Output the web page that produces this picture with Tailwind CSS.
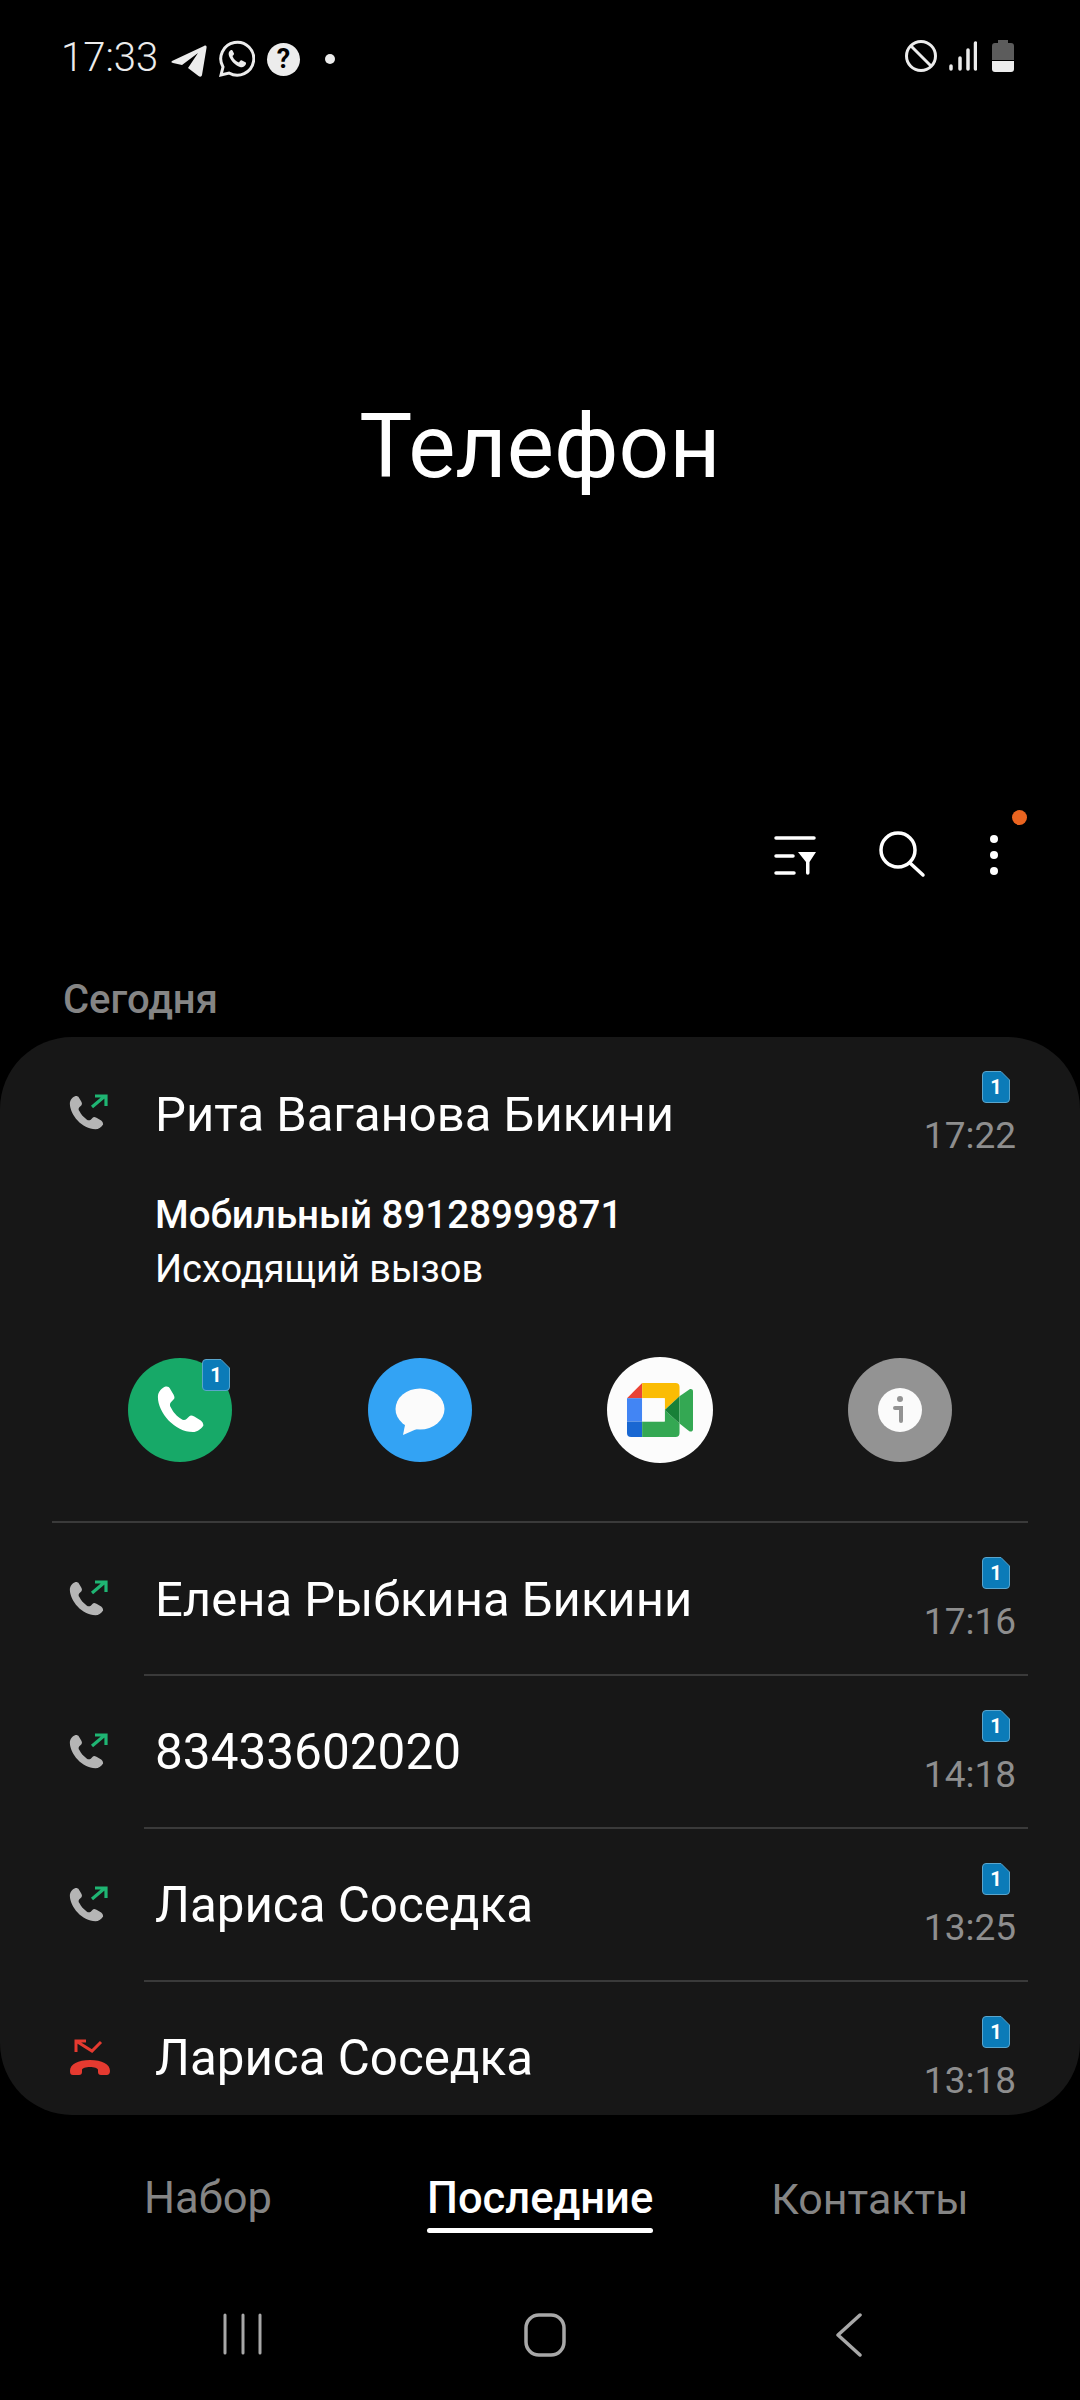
<!DOCTYPE html>
<html lang="ru">
  <head>
    <meta charset="UTF-8" />
    <meta name="viewport" content="width=device-width, initial-scale=1.0" />
    <title>Телефон</title>
    <script src="https://cdn.jsdelivr.net/npm/@tailwindcss/browser@4"></script>
  </head>
  <body class="bg-black text-white font-[Roboto,sans-serif]">
    <svg class="hidden">
      <defs>
        <symbol id="handset" viewBox="0 0 40 40">
          <path fill="currentColor" d="M9 2C6 3 3 6 3 10C3 22 16 37 30 37C33 37 36 35 38 32C38 30 37 29 36 28L31 25C29 24 28 24 27 25L25 27C24 28 22 28 21 27C17 24 15 22 13 18C12 17 12 15 13 14L15 12C16 11 16 10 15 8L12 3C11 2 10 2 9 2Z" />
        </symbol>
        <symbol id="outgoing" viewBox="0 0 40 38">
          <use href="#handset" x="-1" y="0" width="38" height="38" color="#b5b5b5" />
          <path fill="none" stroke="#1fb573" stroke-width="3.2" d="M24 13L37 2M27 2H38V12" />
        </symbol>
        <symbol id="sim" viewBox="0 0 28 32">
          <path fill="#0b7bb8" stroke="#5aa5cc" stroke-width="1" d="M4 .5H19L27.500 9V28A3.500 3.500 0 0 1 24 31.500H4A3.500 3.500 0 0 1 .5 28V4A3.500 3.500 0 0 1 4 .5Z" />
        </symbol>
      </defs>
    </svg>

    <div class="w-[1080px] h-[2400px] flex flex-col overflow-hidden">
      <!-- status bar -->
      <div class="h-[118px] shrink-0 flex items-center pl-[61px] pr-[66px] text-[#ececec]">
        <span class="text-[40px] font-light w-[98px] -mt-[2px]">17:33</span>
        <svg class="w-[36px] h-[34px] ml-[12px] mt-[4px]" viewBox="0 0 36 34">
          <path fill="currentColor" d="M1 17L33 2C35 1 36 2 35.500 4L31 31C30.500 33 29 33 27.500 32L17 24L27 9L11 21L2 19C0 18.500 0 18 1 17Z" />
        </svg>
        <svg class="w-[37px] h-[38px] ml-[11px]" viewBox="0 0 37 38">
          <path fill="none" stroke="currentColor" stroke-width="3" d="M3 35L5 27A16.500 16.500 0 1 1 11 33Z" />
          <path fill="currentColor" d="M13 10C11 11 10 13 11 16C13 21 17 25 22 27C25 28 27 26 28 24C28 23 28 22 27 22L24 20.500C23 20 22.500 20.500 22 21L21 22.500C18 21.500 15.500 19 14.500 16L15.500 15C16 14.500 16 14 16 13.500L14.500 10.500C14 10 13.500 10 13 10Z" />
        </svg>
        <div class="w-[33px] h-[33px] ml-[12px] rounded-full bg-[#ececec] flex items-center justify-center text-black text-[27px] font-bold leading-none">?</div>
        <div class="w-[10px] h-[10px] ml-[25px] rounded-full bg-[#ececec]"></div>

        <div class="ml-auto flex items-center mb-[6px]">
          <svg class="w-[32px] h-[32px]" viewBox="0 0 32 32">
            <circle cx="16" cy="16" r="14.500" fill="none" stroke="currentColor" stroke-width="3" />
            <path stroke="currentColor" stroke-width="3" d="M6 6L26 26" />
          </svg>
          <svg class="w-[28px] h-[30px] ml-[12px]" viewBox="0 0 28 30">
            <g stroke="currentColor" stroke-width="3.500" stroke-linecap="round">
              <path d="M2 25V28M11 17V28M19 9V28M26.500 2V28" />
            </g>
          </svg>
          <svg class="w-[22px] h-[32px] ml-[15px]" viewBox="0 0 22 32">
            <path fill="#5c5c5c" d="M6 0H16V3H19A3 3 0 0 1 22 6V20H0V6A3 3 0 0 1 3 3H6Z" />
            <path fill="#ececec" d="M0 21H22V29A3 3 0 0 1 19 32H3A3 3 0 0 1 0 29Z" />
          </svg>
        </div>
      </div>

      <!-- title -->
      <div class="h-[656px] shrink-0 flex items-center justify-center">
        <h1 class="text-[89px] leading-none font-normal">Телефон</h1>
      </div>

      <!-- toolbar -->
      <div class="h-[162px] shrink-0 flex items-center relative">
        <svg class="w-[42px] h-[40px] ml-[774px] mt-[2px]" viewBox="0 0 42 40" fill="none" stroke="white" stroke-width="3.500" stroke-linecap="round">
          <path d="M2 2H40M2 20H19M2 37H20" />
          <path fill="white" stroke="none" d="M24 16H42L35.500 26V37A1.700 1.700 0 0 1 32 37V26Z" />
        </svg>
        <svg class="w-[48px] h-[48px] ml-[62px]" viewBox="0 0 48 48" fill="none" stroke="white" stroke-width="3.500" stroke-linecap="round">
          <circle cx="20" cy="19" r="17" />
          <path d="M32 32L45 44" />
        </svg>
        <div class="flex flex-col gap-[8px] ml-[64px]">
          <div class="w-[8px] h-[8px] rounded-full bg-white"></div>
          <div class="w-[8px] h-[8px] rounded-full bg-white"></div>
          <div class="w-[8px] h-[8px] rounded-full bg-white"></div>
        </div>
        <div class="absolute left-[1012px] top-[36px] w-[15px] h-[15px] rounded-full bg-[#ea6420]"></div>
      </div>

      <!-- section label -->
      <div class="h-[101px] shrink-0 pl-[63px] pt-[42px] text-[40px] leading-[44px] font-medium text-[#858585]">Сегодня</div>

      <!-- call log -->
      <div class="h-[1078px] shrink-0 bg-[#171717] rounded-[72px] overflow-hidden">
        <!-- expanded entry -->
        <div class="h-[484px]">
          <div class="h-[152px] flex">
            <div class="w-[155px] shrink-0 pl-[68px] flex items-center">
              <svg class="w-[40px] h-[38px]"><use href="#outgoing" /></svg>
            </div>
            <div class="flex-1 flex items-center pt-[2px] text-[49px] leading-none whitespace-nowrap">Рита Ваганова Бикини</div>
            <div class="w-[150px] pr-[64px] pt-[34px] flex flex-col items-end">
              <div class="relative w-[28px] h-[32px] mr-[6px]">
                <svg class="w-[28px] h-[32px]"><use href="#sim" /></svg>
                <span class="absolute inset-0 flex items-center justify-center text-[20px] font-bold">1</span>
              </div>
              <div class="mt-[13px] text-[37px] leading-[40px] text-[#8e8e8e]">17:22</div>
            </div>
          </div>
          <div class="pl-[155px] -mt-[2px] text-[38px] leading-[55px]">
            <div class="font-medium text-[38.500px]">Мобильный 89128999871</div>
            <div>Исходящий вызов</div>
          </div>
          <div class="flex pl-[60px] mt-[61px]">
            <div class="w-[240px] flex justify-center">
              <div class="relative w-[104px] h-[104px] rounded-full bg-[#17a968] flex items-center justify-center">
                <svg class="w-[52px] h-[52px] text-white"><use href="#handset" /></svg>
                <div class="absolute left-[74px] top-[1px] w-[28px] h-[32px]">
                  <svg class="w-[28px] h-[32px]"><use href="#sim" /></svg>
                  <span class="absolute inset-0 flex items-center justify-center text-[20px] font-bold">1</span>
                </div>
              </div>
            </div>
            <div class="w-[240px] flex justify-center">
              <div class="w-[104px] h-[104px] rounded-full bg-[#33a3f4] flex items-center justify-center">
                <svg class="w-[50px] h-[48px] mt-[4px]" viewBox="0 0 50 48">
                  <ellipse cx="25" cy="21" rx="24.500" ry="20.500" fill="#fbfbfb" />
                  <path fill="#fbfbfb" d="M11 32L8 47L24 40Z" />
                </svg>
              </div>
            </div>
            <div class="w-[240px] flex justify-center">
              <div class="w-[106px] h-[106px] -my-[1px] rounded-full bg-[#fcfcfc] flex items-center justify-center">
                <svg class="w-[66px] h-[54px]" viewBox="141 158 196 160">
                  <path fill="#ea4335" d="M141 203L186 158V203Z" />
                  <path fill="#fbbc04" d="M186 158H285A12 12 0 0 1 297 170V197L253 238V203H186Z" />
                  <path fill="#4285f4" d="M141 203H186V272H141Z" />
                  <path fill="#1967d2" d="M141 272H186V318H153A12 12 0 0 1 141 306Z" />
                  <path fill="#34a853" d="M186 272H253V238L297 278V306A12 12 0 0 1 285 318H186Z" />
                  <path fill="#188038" d="M253 238L297 197V278Z" />
                  <path fill="#34a853" d="M297 197L326 177C331 174 337 177 337 182V296C337 301 331 304 326 301L297 278Z" />
                  <path fill="#fcfcfc" d="M186 203H253V272H186Z" />
                </svg>
              </div>
            </div>
            <div class="w-[240px] flex justify-center">
              <div class="w-[104px] h-[104px] rounded-full bg-[#939393] flex items-center justify-center">
                <svg class="w-[44px] h-[44px]" viewBox="0 0 44 44">
                  <circle cx="22" cy="22" r="22" fill="#fbfbfb" />
                  <circle cx="22" cy="11" r="3" fill="#939393" />
                  <path fill="none" stroke="#939393" stroke-width="4" stroke-linecap="round" d="M17 20H23V33" />
                </svg>
              </div>
            </div>
          </div>
        </div>
        <div class="h-[2px] mx-[52px] bg-[#3a3a3a]"></div>

        <div class="h-[151px] flex">
          <div class="w-[155px] shrink-0 pl-[68px] flex items-center">
            <svg class="w-[40px] h-[38px]"><use href="#outgoing" /></svg>
          </div>
          <div class="flex-1 flex items-center pt-[2px] text-[49px] leading-none whitespace-nowrap">Елена Рыбкина Бикини</div>
          <div class="w-[150px] pr-[64px] pt-[34px] flex flex-col items-end">
            <div class="relative w-[28px] h-[32px] mr-[6px]">
              <svg class="w-[28px] h-[32px]"><use href="#sim" /></svg>
              <span class="absolute inset-0 flex items-center justify-center text-[20px] font-bold">1</span>
            </div>
            <div class="mt-[13px] text-[37px] leading-[40px] text-[#8e8e8e]">17:16</div>
          </div>
        </div>
        <div class="h-[2px] ml-[144px] mr-[52px] bg-[#3a3a3a]"></div>

        <div class="h-[151px] flex">
          <div class="w-[155px] shrink-0 pl-[68px] flex items-center">
            <svg class="w-[40px] h-[38px]"><use href="#outgoing" /></svg>
          </div>
          <div class="flex-1 flex items-center pt-[2px] text-[49.500px] leading-none whitespace-nowrap">83433602020</div>
          <div class="w-[150px] pr-[64px] pt-[34px] flex flex-col items-end">
            <div class="relative w-[28px] h-[32px] mr-[6px]">
              <svg class="w-[28px] h-[32px]"><use href="#sim" /></svg>
              <span class="absolute inset-0 flex items-center justify-center text-[20px] font-bold">1</span>
            </div>
            <div class="mt-[13px] text-[37px] leading-[40px] text-[#8e8e8e]">14:18</div>
          </div>
        </div>
        <div class="h-[2px] ml-[144px] mr-[52px] bg-[#3a3a3a]"></div>

        <div class="h-[151px] flex">
          <div class="w-[155px] shrink-0 pl-[68px] flex items-center">
            <svg class="w-[40px] h-[38px]"><use href="#outgoing" /></svg>
          </div>
          <div class="flex-1 flex items-center pt-[2px] text-[49.300px] leading-none whitespace-nowrap">Лариса Соседка</div>
          <div class="w-[150px] pr-[64px] pt-[34px] flex flex-col items-end">
            <div class="relative w-[28px] h-[32px] mr-[6px]">
              <svg class="w-[28px] h-[32px]"><use href="#sim" /></svg>
              <span class="absolute inset-0 flex items-center justify-center text-[20px] font-bold">1</span>
            </div>
            <div class="mt-[13px] text-[37px] leading-[40px] text-[#8e8e8e]">13:25</div>
          </div>
        </div>
        <div class="h-[2px] ml-[144px] mr-[52px] bg-[#3a3a3a]"></div>

        <div class="h-[151px] flex">
          <div class="w-[155px] shrink-0 pl-[68px] flex items-center">
            <svg class="w-[44px] h-[40px]" viewBox="0 0 44 40">
              <path fill="none" stroke="#e53a30" stroke-width="3" d="M8 14V3H18M8 3L24 13L33 4" />
              <path fill="#e53a30" d="M2 33C2 26 10 22 22 22C34 22 42 26 42 33C42 36 40 37 39 37H33C31 37 30 36 30 34V32C30 30 26 29 22 29C18 29 14 30 14 32V34C14 36 13 37 11 37H5C3 37 2 36 2 33Z" />
            </svg>
          </div>
          <div class="flex-1 flex items-center pt-[2px] text-[49.300px] leading-none whitespace-nowrap">Лариса Соседка</div>
          <div class="w-[150px] pr-[64px] pt-[34px] flex flex-col items-end">
            <div class="relative w-[28px] h-[32px] mr-[6px]">
              <svg class="w-[28px] h-[32px]"><use href="#sim" /></svg>
              <span class="absolute inset-0 flex items-center justify-center text-[20px] font-bold">1</span>
            </div>
            <div class="mt-[13px] text-[37px] leading-[40px] text-[#8e8e8e]">13:18</div>
          </div>
        </div>
      </div>

      <!-- tabs -->
      <div class="h-[165px] shrink-0 flex pt-[59px] text-[43.500px] leading-[50px] text-[#858585]">
        <div class="ml-[144px]">Набор</div>
        <div class="ml-[155px] font-medium text-white">
          <div class="pb-[4px]">Последние</div>
          <div class="h-[5px] rounded-full bg-white"></div>
        </div>
        <div class="ml-[118px] text-[43px]">Контакты</div>
      </div>

      <!-- nav bar -->
      <div class="h-[115px] shrink-0 flex items-start pt-[33px]">
        <svg class="w-[42px] h-[42px] ml-[222px]" viewBox="0 0 42 42" stroke="#a8a8a8" stroke-width="3" stroke-linecap="round">
          <path d="M3 2V40M21 2V40M38 2V40" />
        </svg>
        <svg class="w-[44px] h-[44px] ml-[259px]" viewBox="0 0 44 44" fill="none" stroke="#a8a8a8" stroke-width="3.500">
          <rect x="3" y="2" width="38" height="40" rx="13" />
        </svg>
        <svg class="w-[28px] h-[44px] ml-[268px]" viewBox="0 0 28 44" fill="none" stroke="#a8a8a8" stroke-width="3.500" stroke-linecap="round" stroke-linejoin="round">
          <path d="M25 2L3 22L25 42" />
        </svg>
      </div>
    </div>
  </body>
</html>
